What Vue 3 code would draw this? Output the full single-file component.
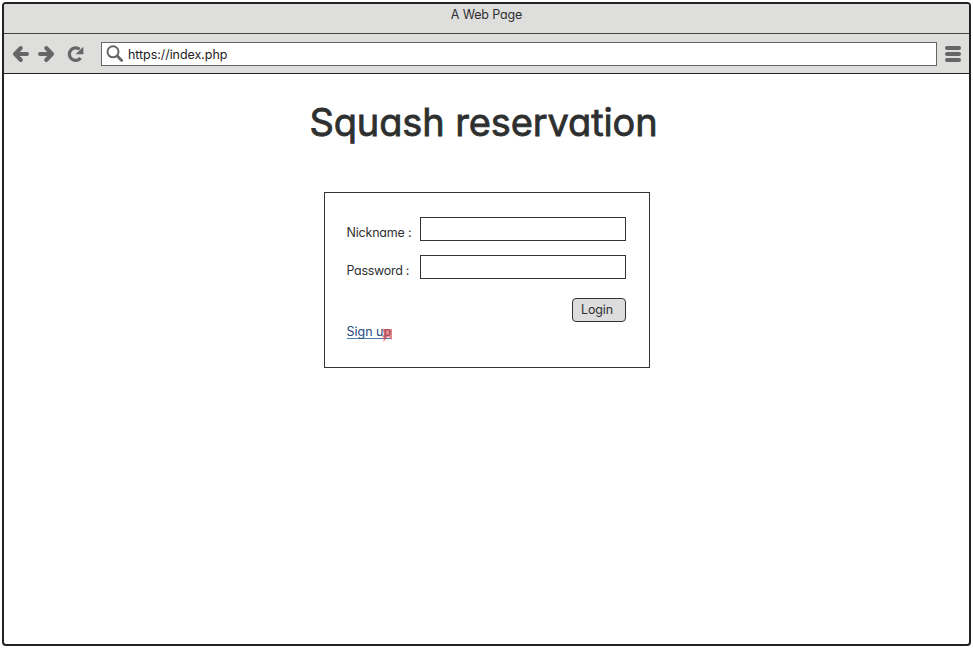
<script setup>
import { ref } from 'vue'

const url = ref('https://index.php')
const fields = ref([
  { id: 'nickname', label: 'Nickname :', type: 'text', value: '' },
  { id: 'password', label: 'Password :', type: 'password', value: '' },
])
</script>

<template>
  <div class="window">
    <header class="titlebar"><span>A Web Page</span></header>
    <nav class="toolbar">
      <svg class="nav-icons" width="80" height="24" viewBox="0 0 80 24">
        <g fill="none" stroke="#666" stroke-width="4" stroke-linecap="round" stroke-linejoin="round">
          <path d="M9.8 6 L4 12 L9.8 18 M4.3 12 H16" />
          <path d="M35.2 6 L41 12 L35.2 18 M29 12 H40.5" />
          <path d="M69.6 16 A6.3 6.3 0 1 1 68.6 7.2" stroke-linecap="butt" stroke-width="3.3" />
        </g>
        <path d="M72.4 4.8 V12.2 H64.6 Z" fill="#666" />
      </svg>
      <div class="address">
        <svg width="18" height="18" viewBox="0 0 18 18">
          <circle cx="7" cy="6.8" r="5.5" fill="#fff" stroke="#666" stroke-width="2" />
          <path d="M11.3 11 L15.7 15.4" stroke="#666" stroke-width="2.8" stroke-linecap="round" />
        </svg>
        <span class="url">{{ url }}</span>
      </div>
      <div class="menu"><i></i><i></i><i></i></div>
    </nav>
    <main class="page">
      <h1>Squash reservation</h1>
      <form class="card" @submit.prevent>
        <div v-for="f in fields" :key="f.id" class="row">
          <label :for="f.id" :class="f.id">{{ f.label }}</label>
          <input :id="f.id" v-model="f.value" :type="f.type" />
        </div>
        <button type="submit">Login</button>
        <a class="signup"><span>Sign up</span>
          <svg class="marker" width="12" height="14" viewBox="0 0 12 14">
            <path d="M0 0 H10 V11 L6.5 7.5 L5 9 L1.5 13 V8.5 L0 8 L2 5 Z" fill="#d9484c" fill-opacity=".65" />
          </svg>
        </a>
      </form>
    </main>
  </div>
</template>

<style>
body {
  margin: 0;
  background: #fff;
}
</style>

<style scoped>
* {
  box-sizing: border-box;
}
.window {
  width: 969px;
  height: 644px;
  margin: 2px;
  border: 2px solid #222;
  border-radius: 4px;
  overflow: hidden;
  display: flex;
  flex-direction: column;
  color: #2e3030;
  font: 12.5px/16px Inter, "Liberation Sans", sans-serif;
  font-feature-settings: "cv11";
}
.titlebar {
  height: 30px;
  flex: none;
  padding-top: 3px;
  text-align: center;
  letter-spacing: -0.15px;
  background: #dededd;
  border-bottom: 1px solid #444;
}
.toolbar {
  height: 40px;
  flex: none;
  display: flex;
  align-items: center;
  padding: 0 8px 0 7px;
  background: #dededd;
  border-bottom: 1px solid #222;
}
.nav-icons {
  margin-right: 10px;
}
.address {
  width: 836px;
  height: 24px;
  display: flex;
  align-items: center;
  gap: 4px;
  padding-left: 4px;
  background: #fff;
  border: 1px solid #666;
}
.url {
  padding-top: 2px;
  letter-spacing: -0.06px;
  color: #222;
}
.menu {
  width: 16px;
  margin-left: 8px;
  display: flex;
  flex-direction: column;
  gap: 2px;
}
.menu i {
  height: 4px;
  border-radius: 2px;
  background: #666;
}
.page {
  flex: 1;
  display: flex;
  flex-direction: column;
  align-items: center;
}
h1 {
  margin: 24px 6px 0 0;
  font-size: 38px;
  line-height: 48px;
  font-weight: 400;
  letter-spacing: -0.12px;
  -webkit-text-stroke: 0.8px #2e3030;
  white-space: nowrap;
}
.card {
  width: 326px;
  height: 176px;
  margin-top: 46px;
  padding: 24px 23px 0 22px;
  border: 1px solid #333;
  display: flex;
  flex-direction: column;
}
.row {
  display: flex;
  justify-content: space-between;
  margin-bottom: 14px;
}
label {
  padding-top: 8px;
  white-space: nowrap;
  letter-spacing: -0.2px;
}
.password {
  letter-spacing: -0.3px;
}
input {
  width: 206px;
  height: 24px;
  border: 1px solid #333;
  background: #fff;
  outline: none;
}
button {
  align-self: flex-end;
  width: 54px;
  height: 24px;
  margin-top: 5px;
  padding: 0 3px 0 0;
  font: inherit;
  font-feature-settings: inherit;
  letter-spacing: -0.15px;
  color: inherit;
  background: #ddd;
  border: 1px solid #333;
  border-radius: 4px;
}
.signup {
  position: relative;
  align-self: flex-start;
  height: 17px;
  padding-top: 2px;
  color: #254a7d;
  border-bottom: 1px solid #4b83b5;
}
.marker {
  position: absolute;
  left: 35px;
  top: 7px;
}
</style>
